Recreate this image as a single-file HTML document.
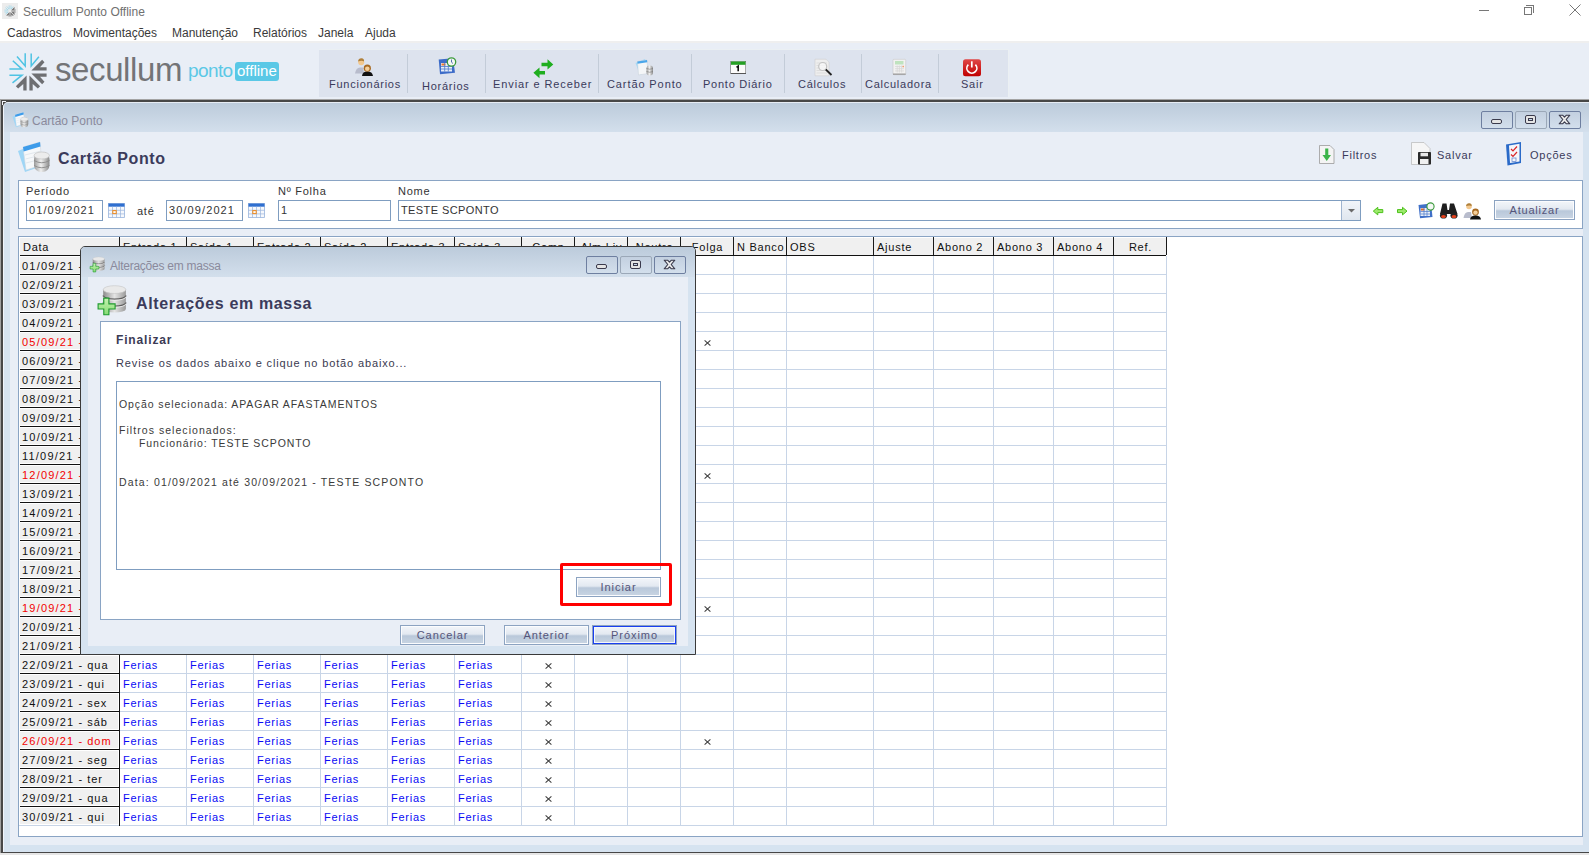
<!DOCTYPE html><html><head><meta charset="utf-8"><style>
*{margin:0;padding:0;box-sizing:border-box}
html,body{width:1589px;height:855px;overflow:hidden;background:#fff;position:relative;font-family:"Liberation Sans",sans-serif}
.abs{position:absolute}
.t{position:absolute;white-space:nowrap;line-height:1}
.ui{font-size:12px;color:#3a3a3a}
.v{font-size:11px;letter-spacing:0.75px}
.vd{font-size:11px;letter-spacing:1.0px}
.vdd{letter-spacing:1.2px}
.v10{font-size:10.5px;letter-spacing:0.9px;color:#3a3a3a}
.btn{position:absolute;border:1px solid #8ca3c1;background:linear-gradient(#f3f6fa 0%,#e3e9f1 45%,#b9c8da 55%,#c9d5e3 100%);box-shadow:inset 0 0 0 1px #fbfcfe}
.btn span{position:absolute;left:0;right:0;text-align:center;white-space:nowrap;line-height:1;font-size:11px;letter-spacing:0.95px;color:#55557a}
.wb{position:absolute;border:1px solid #7d8fa8;border-radius:2px;background:linear-gradient(#dfe7f1,#c3d1e2)}
</style></head><body>
<div class="abs" style="left:2px;top:3px;width:16px;height:16px;background:#ececec"></div>
<svg class="abs" style="left:4px;top:5px;overflow:visible" width="12" height="12" viewBox="-20 -20 40 40"><path d="M-11 -15.5L-2.8 -6V-18.7M10.9 -15.2L3.2 -6V-18.4M-15.2 -11.3L-6 -2.9H-18.6M-15.5 10.8L-6 3.2H-18.6" stroke="#8fd4ec" stroke-width="2.2" fill="none"/><path d="M3.38 -1.4H18.6V-4.7H12L16.48 -9.83L14.14 -12.16Z M3.38 1.4H18.6V4.7H12L16.48 9.83L14.14 12.16Z M1.4 3.38V18.6H4.7V12L9.83 16.48L12.16 14.14Z M-1.4 3.38V18.6H-4.7V12L-9.83 16.48L-12.16 14.14Z" fill="#707070"/></svg>
<div class="t ui" style="left:23px;top:6px;color:#707070">Secullum Ponto Offline</div>
<div class="abs" style="left:1479px;top:10px;width:10px;height:1px;background:#777"></div>
<div class="abs" style="left:1524px;top:7px;width:8px;height:8px;border:1px solid #777;background:#fff"></div>
<div class="abs" style="left:1526px;top:5px;width:8px;height:8px;border-top:1px solid #777;border-right:1px solid #777"></div>
<svg class="abs" style="left:1569px;top:4px" width="12" height="12"><path d="M0.5 0.5L11.5 11.5M11.5 0.5L0.5 11.5" stroke="#777" stroke-width="1"/></svg>
<div class="t ui" style="left:7px;top:27px">Cadastros</div>
<div class="t ui" style="left:73px;top:27px">Movimentações</div>
<div class="t ui" style="left:172px;top:27px">Manutenção</div>
<div class="t ui" style="left:253px;top:27px">Relatórios</div>
<div class="t ui" style="left:318px;top:27px">Janela</div>
<div class="t ui" style="left:365px;top:27px">Ajuda</div>
<div class="abs" style="left:0;top:41px;width:1589px;height:58px;background:#e9eef6"></div>
<svg class="abs" style="left:8.4px;top:51.6px;overflow:visible" width="40" height="40" viewBox="-20 -20 40 40"><path d="M-11 -15.5L-2.8 -6V-18.7M10.9 -15.2L3.2 -6V-18.4M-15.2 -11.3L-6 -2.9H-18.6M-15.5 10.8L-6 3.2H-18.6" stroke="#4fc3e3" stroke-width="1.5" fill="none" stroke-linejoin="miter"/><path d="M3.38 -1.4H18.6V-4.7H12L16.48 -9.83L14.14 -12.16Z M3.38 1.4H18.6V4.7H12L16.48 9.83L14.14 12.16Z M1.4 3.38V18.6H4.7V12L9.83 16.48L12.16 14.14Z M-1.4 3.38V18.6H-4.7V12L-9.83 16.48L-12.16 14.14Z" fill="#6e6f72"/></svg>
<div class="t" style="left:55px;top:53px;font-size:33px;letter-spacing:-0.4px;color:#737477">secullum</div>
<div class="t" style="left:188px;top:61px;font-size:19px;letter-spacing:-0.6px;color:#5bc8e6">ponto</div>
<div class="abs" style="left:235px;top:62px;width:44px;height:19px;border-radius:3px;background:#5ac8e6"></div>
<div class="t" style="left:237px;top:63px;font-size:15px;letter-spacing:0px;color:#fff">offline</div>
<div class="abs" style="left:319px;top:49px;width:690px;height:48px;background:#ebf0f3"></div>
<div class="abs" style="left:319px;top:50px;width:689px;height:47px;background:#dde3ee"></div>
<div class="abs" style="left:407px;top:54px;width:1px;height:39px;background:#c3ccd8"></div>
<div class="abs" style="left:485px;top:54px;width:1px;height:39px;background:#c3ccd8"></div>
<div class="abs" style="left:598px;top:54px;width:1px;height:39px;background:#c3ccd8"></div>
<div class="abs" style="left:691px;top:54px;width:1px;height:39px;background:#c3ccd8"></div>
<div class="abs" style="left:784px;top:54px;width:1px;height:39px;background:#c3ccd8"></div>
<div class="abs" style="left:861px;top:54px;width:1px;height:39px;background:#c3ccd8"></div>
<div class="abs" style="left:938px;top:54px;width:1px;height:39px;background:#c3ccd8"></div>
<div class="t v" style="left:329px;top:79px;color:#3a3a5a">Funcionários</div>
<div class="t v" style="left:422px;top:81px;color:#3a3a5a">Horários</div>
<div class="t v" style="left:493px;top:79px;color:#3a3a5a;letter-spacing:0.9px">Enviar e Receber</div>
<div class="t v" style="left:607px;top:79px;color:#3a3a5a;letter-spacing:0.9px">Cartão Ponto</div>
<div class="t v" style="left:703px;top:79px;color:#3a3a5a">Ponto Diário</div>
<div class="t v" style="left:798px;top:79px;color:#3a3a5a">Cálculos</div>
<div class="t v" style="left:865px;top:79px;color:#3a3a5a">Calculadora</div>
<div class="t v" style="left:961px;top:79px;color:#3a3a5a">Sair</div>
<svg class="abs" style="left:0;top:0;overflow:visible" width="1589" height="855">
<defs>
<linearGradient id="gdb" x1="0" x2="1"><stop offset="0" stop-color="#9a9a9a"/><stop offset="0.45" stop-color="#f0f0f0"/><stop offset="1" stop-color="#8a8a8a"/></linearGradient>
<linearGradient id="gred" x1="0" y1="0" x2="0" y2="1"><stop offset="0" stop-color="#e04848"/><stop offset="1" stop-color="#c00000"/></linearGradient>
</defs>
<!-- Funcionarios -->
<path d="M355 73.5Q356 67.5 360 67.5H363L364 73.5Z" fill="#b8bccc"/>
<circle cx="361.2" cy="62.2" r="3" fill="#f3c88e"/><path d="M358 61.5Q358.5 58.2 361.5 58.3Q364.5 58.5 364 61.5Q362 60 358 61.5Z" fill="#b0803a"/>
<path d="M362 76Q362.5 71.5 367.3 71.2Q372.3 71.5 373 76Z" fill="#111"/>
<circle cx="367.3" cy="68.2" r="3.6" fill="#a86a22"/><circle cx="367.3" cy="68.8" r="2.3" fill="#f5cf9a"/>
<!-- Horarios -->
<path d="M438.7 59.5L453 58.2L455 72.8L440 74.2Z" fill="#3d6cc8"/>
<rect x="441" y="63" width="11" height="8.5" fill="#e8eef8"/>
<rect x="441.5" y="63.5" width="4" height="2" fill="#e8782a"/>
<path d="M441 66.5H452M441 69H452M444.7 63V71.5M448.3 63V71.5" stroke="#4a78cc" stroke-width="0.8"/>
<circle cx="451.5" cy="62" r="4.2" fill="#f4f8f4" stroke="#3c9a3c" stroke-width="1.3"/>
<path d="M451.5 59.5V62.2L453 63.5" stroke="#3050a0" stroke-width="0.8" fill="none"/>
<!-- Enviar e Receber -->
<path d="M541.5 62.7H547.5V59.3L553.3 64.4L547.5 69.6V66.2H541.5Z" fill="#1fae1f"/>
<path d="M545 71H539.5V67.4L533.4 72.8L539.5 78.3V74.6H545Z" fill="#1fae1f"/>
<!-- Cartao Ponto -->
<path d="M635.5 63L645 59L649.5 71L640 75Z" fill="#a8d8f4"/>
<path d="M637.5 61.5L647 60L648 73.5L638.5 75Z" fill="#f4f6f8" stroke="#c8d0d8" stroke-width="0.5"/>
<path d="M637.3 61.6L647 60L647.3 62.3L637.5 63.8Z" fill="#4aa6ea"/>
<rect x="646.5" y="65.5" width="6.5" height="10" rx="3" fill="url(#gdb)"/>
<path d="M646.5 68.5Q649.7 70 653 68.5M646.5 71.5Q649.7 73 653 71.5" stroke="#777" stroke-width="0.6" fill="none"/>
<!-- Ponto Diario -->
<rect x="730.5" y="61" width="15.5" height="13" fill="#555"/>
<rect x="731" y="61.5" width="14.5" height="11.5" fill="#fbfbfb"/>
<rect x="731" y="61.5" width="14.5" height="3.3" fill="#24a024"/>
<path d="M736.5 67.3L738.2 66V71.2" stroke="#111" stroke-width="1.6" fill="none"/>
<!-- Calculos -->
<path d="M815 59.2H826L829 62.2V75.8H815Z" fill="#eeeeee" stroke="#cfcfcf" stroke-width="0.6"/>
<path d="M816.5 63H827M816.5 65.5H827M816.5 68H827M816.5 70.5H827M816.5 73H827" stroke="#d6d6d6" stroke-width="0.7"/>
<circle cx="822.7" cy="66.5" r="4" fill="#f8f8f8" fill-opacity="0.8" stroke="#c4c4c4" stroke-width="1.2"/>
<path d="M825.8 69.5L831.5 75" stroke="#222" stroke-width="1.8"/>
<!-- Calculadora -->
<rect x="893" y="59.3" width="12.7" height="15.4" rx="1" fill="#f2f2f2" stroke="#c8c8c8" stroke-width="0.6"/>
<rect x="893" y="73.5" width="12.7" height="1.3" fill="#9a9a9a"/>
<rect x="895" y="61" width="8.5" height="3.5" fill="#bfe3bf"/>
<path d="M895 66.5H904M895 68.7H904M895 70.9H904M897.2 65.5V72.5M899.4 65.5V72.5M901.6 65.5V72.5" stroke="#d8d8d8" stroke-width="0.8"/>
<rect x="902.5" y="65.8" width="1.5" height="1.5" fill="#f4a070"/>
<!-- Sair -->
<rect x="963" y="59.2" width="18" height="17" rx="2.5" fill="url(#gred)"/>
<path d="M968.3 64.6A5 5 0 1 0 975.4 64.6" stroke="#fff" stroke-width="1.7" fill="none"/>
<path d="M971.8 61.3V67.5" stroke="#fff" stroke-width="1.7"/>
</svg>
<div class="abs" style="left:0;top:41px;width:1589px;height:2px;background:#efefef"></div>
<div class="abs" style="left:0;top:99px;width:1589px;height:756px;background:#474747"></div>
<div class="abs" style="left:0;top:99px;width:1589px;height:1px;background:#a4a4a4"></div>
<div class="abs" style="left:0;top:99px;width:1px;height:756px;background:#a0a0a0"></div>
<div class="abs" style="left:3px;top:102px;width:1586px;height:750px;background:#d6e3f0;border-top-left-radius:5px;border-top:1px solid #e6ecf4;border-left:1px solid #f0f4fa"></div>
<div class="abs" style="left:4px;top:103px;width:1585px;height:29px;border-top-left-radius:4px;background:linear-gradient(#bccbdb,#d3dfec)"></div>
<div class="abs" style="left:2px;top:101px;width:4px;height:1px;background:#f4f6fa"></div>
<div class="abs" style="left:2px;top:101px;width:1px;height:4px;background:#f4f6fa"></div>
<div class="abs" style="left:0;top:853px;width:1589px;height:2px;background:#e6e6e6"></div>
<div class="t" style="left:32px;top:115px;font-size:12px;color:#8a8a9c">Cartão Ponto</div>
<div class="abs" style="left:1481px;top:111px;width:32px;height:18px;border:1px solid #6e7fa0;border-radius:2px;background:linear-gradient(#c3d0e0,#d3dfec)"></div>
<div class="abs" style="left:1491px;top:119px;width:11px;height:5px;border:1px solid #3a3a4c;border-radius:2px;background:#e4e4e4"></div>
<div class="abs" style="left:1515px;top:111px;width:32px;height:18px;border:1px solid #9ba8b8;border-radius:2px;background:linear-gradient(#c3d0e0,#d3dfec)"></div>
<div class="abs" style="left:1525px;top:115px;width:11px;height:9px;border:1.5px solid #3a3a4c;border-radius:2px;background:#e4e4e4"></div>
<div class="abs" style="left:1528px;top:118px;width:5px;height:3px;border:1px solid #3a3a4c;background:#c8d8ea"></div>
<div class="abs" style="left:1549px;top:111px;width:32px;height:18px;border:1px solid #6e7fa0;border-radius:2px;background:linear-gradient(#c3d0e0,#d3dfec)"></div>
<svg class="abs" style="left:1558px;top:114px" width="13" height="11" viewBox="0 0 13 11"><path d="M1.2 1.2H4.6L6.5 3.2L8.4 1.2H11.8L8.2 5.5L11.8 9.8H8.4L6.5 7.8L4.6 9.8H1.2L4.8 5.5Z" fill="#ececec" stroke="#3a3a4c" stroke-width="1.1" stroke-linejoin="round"/></svg>
<div class="abs" style="left:10px;top:132px;width:1573px;height:713px;background:#e9eef6"></div>
<div class="t" style="left:58px;top:151px;font-size:16px;font-weight:bold;letter-spacing:0.6px;color:#3b3b5b">Cartão Ponto</div>
<div class="t v" style="left:1342px;top:150px;color:#3a3a5a">Filtros</div>
<div class="t v" style="left:1437px;top:150px;color:#3a3a5a">Salvar</div>
<div class="t v" style="left:1530px;top:150px;color:#3a3a5a">Opções</div>
<div class="abs" style="left:18px;top:180px;width:1565px;height:49px;background:#fff;border:1px solid #8aa4c4"></div>
<div class="t v" style="left:26px;top:186px;color:#333">Período</div>
<div class="abs" style="left:26px;top:200px;width:77px;height:21px;background:#fff;border:1px solid #7f9dc0"></div>
<div class="t v" style="left:29px;top:205px;color:#333;letter-spacing:1.1px">01/09/2021</div>
<div class="t v" style="left:137px;top:206px;color:#333">até</div>
<div class="abs" style="left:166px;top:200px;width:77px;height:21px;background:#fff;border:1px solid #7f9dc0"></div>
<div class="t v" style="left:169px;top:205px;color:#333;letter-spacing:1.1px">30/09/2021</div>
<div class="t v" style="left:278px;top:186px;color:#333">Nº Folha</div>
<div class="abs" style="left:278px;top:200px;width:113px;height:21px;background:#fff;border:1px solid #7f9dc0"></div>
<div class="t v" style="left:281px;top:205px;color:#333;letter-spacing:1.1px">1</div>
<div class="t v" style="left:398px;top:186px;color:#333">Nome</div>
<div class="abs" style="left:398px;top:200px;width:963px;height:21px;background:#fff;border:1px solid #7f9dc0"></div>
<div class="t v" style="left:401px;top:205px;color:#333;letter-spacing:0.4px">TESTE SCPONTO</div>
<div class="abs" style="left:1341px;top:201px;width:19px;height:19px;background:linear-gradient(#f2f5f9,#dfe6ef);border-left:1px solid #9fb4cf"></div>
<div class="btn" style="left:1494px;top:200px;width:81px;height:20px"><span style="top:4px;letter-spacing:0.8px">Atualizar</span></div>
<svg class="abs" style="left:0;top:0;overflow:visible" width="1589" height="855"><g transform="translate(12.5,112.3) scale(0.5)">
<path d="M0 9L17 2L24 24L7 30Z" fill="#9fd6f6"/>
<path d="M5 5L22 0L24 23L8 28Z" fill="#f6f8fa" stroke="#d0d8e0" stroke-width="0.6"/>
<path d="M5 5L22 0L22.5 4.5L5.6 9.5Z" fill="#3e9cea"/>
<path d="M7 13L23 9M7.5 17L23.3 13M8 21L23.5 17" stroke="#dde3ea" stroke-width="0.8"/>
<rect x="16" y="10" width="15.5" height="20" rx="7" fill="url(#gdb)"/>
<ellipse cx="23.75" cy="13.5" rx="7.7" ry="3.5" fill="#ececec" stroke="#bdbdbd" stroke-width="0.6"/>
<path d="M16 18.5Q23.75 23 31.5 18.5M16 23.5Q23.75 28 31.5 23.5" stroke="#8a8a8a" stroke-width="0.9" fill="none"/>
</g><g transform="translate(18,142) scale(1.0)">
<path d="M0 9L17 2L24 24L7 30Z" fill="#9fd6f6"/>
<path d="M5 5L22 0L24 23L8 28Z" fill="#f6f8fa" stroke="#d0d8e0" stroke-width="0.6"/>
<path d="M5 5L22 0L22.5 4.5L5.6 9.5Z" fill="#3e9cea"/>
<path d="M7 13L23 9M7.5 17L23.3 13M8 21L23.5 17" stroke="#dde3ea" stroke-width="0.8"/>
<rect x="16" y="10" width="15.5" height="20" rx="7" fill="url(#gdb)"/>
<ellipse cx="23.75" cy="13.5" rx="7.7" ry="3.5" fill="#ececec" stroke="#bdbdbd" stroke-width="0.6"/>
<path d="M16 18.5Q23.75 23 31.5 18.5M16 23.5Q23.75 28 31.5 23.5" stroke="#8a8a8a" stroke-width="0.9" fill="none"/>
</g>
<!-- Filtros -->
<path d="M1319.5 145.5H1330L1334 149.5V163.5H1319.5Z" fill="#f4f4f4" stroke="#9a9a9a" stroke-width="0.8"/>
<path d="M1325.2 148.5H1328.3V155H1331L1326.75 161L1322.5 155H1325.2Z" fill="#3cb44a"/>
<!-- Salvar -->
<path d="M1411.5 142.5H1424L1430 148.5V164.5H1411.5Z" fill="#f6f6f6" stroke="#b8b8b8" stroke-width="0.7"/>
<rect x="1418" y="152" width="13" height="12.5" rx="0.8" fill="#2a2a2a"/>
<rect x="1420.5" y="152.8" width="7.5" height="3.5" fill="#e8e8e8"/>
<rect x="1420" y="159" width="8.5" height="5" fill="#f0f0f0"/>
<!-- Opcoes -->
<path d="M1506 144.5L1521 142V163L1507.5 165.6Z" fill="#2a6ac8"/>
<path d="M1509 145.5L1519.5 143.8V161.5L1510 163Z" fill="#f4f6fa"/>
<path d="M1511 149L1513 151L1517 146.5M1511 154.5L1513 156.5L1517 152" stroke="#d8262a" stroke-width="1.2" fill="none"/>
<rect x="1512" y="158" width="4" height="3.5" fill="none" stroke="#6a8ad0" stroke-width="0.8"/>
<!-- calendars -->
<rect x="108.5" y="203.5" width="16" height="14" fill="#f6f8fc" stroke="#9ab4dc" stroke-width="0.8"/>
<rect x="108.5" y="203.5" width="16" height="3.2" fill="#2f6fd0"/>
<path d="M108.5 210.3H124.5M108.5 213.9H124.5M112.5 206.7V217.5M116.5 206.7V217.5M120.5 206.7V217.5" stroke="#9ab4dc" stroke-width="0.7"/>
<rect x="112.8" y="210.6" width="3.4" height="3" fill="none" stroke="#f08a1c" stroke-width="1"/>
<rect x="248.5" y="203.5" width="16" height="14" fill="#f6f8fc" stroke="#9ab4dc" stroke-width="0.8"/>
<rect x="248.5" y="203.5" width="16" height="3.2" fill="#2f6fd0"/>
<path d="M248.5 210.3H264.5M248.5 213.9H264.5M252.5 206.7V217.5M256.5 206.7V217.5M260.5 206.7V217.5" stroke="#9ab4dc" stroke-width="0.7"/>
<rect x="252.8" y="210.6" width="3.4" height="3" fill="none" stroke="#f08a1c" stroke-width="1"/>
<!-- dropdown arrow -->
<path d="M1348 209H1355L1351.5 212.5Z" fill="#6a6a6a"/>
<!-- arrows -->
<path d="M1382.8 209.6H1377.8V207.3L1373.3 211.1L1377.8 214.9V212.6H1382.8Z" fill="#9de86c" stroke="#4cc21a" stroke-width="1"/>
<path d="M1397.5 209.6H1402.5V207.3L1407 211.1L1402.5 214.9V212.6H1397.5Z" fill="#9de86c" stroke="#4cc21a" stroke-width="1"/>
<!-- schedule -->
<path d="M1418.5 205L1431 203.5L1432.5 217L1420 218.3Z" fill="#4070c8"/>
<rect x="1420.5" y="208" width="9.5" height="8" fill="#e8eef8"/>
<rect x="1421" y="208.5" width="3.5" height="2" fill="#e06a2a"/>
<path d="M1420.5 211.5H1430M1420.5 214H1430M1424 208V216M1427 208V216" stroke="#4a78cc" stroke-width="0.7"/>
<circle cx="1430.5" cy="206.5" r="3.6" fill="#f4f8f4" stroke="#3c9a3c" stroke-width="1.1"/>
<!-- binoculars -->
<path d="M1440 214L1442.5 203.5H1446.5L1447.5 210H1449L1450 203.5H1454L1457.5 214Z" fill="#1e1e1e"/>
<ellipse cx="1443.5" cy="215.5" rx="3.6" ry="3.1" fill="#222"/><ellipse cx="1454" cy="215.5" rx="3.6" ry="3.1" fill="#222"/>
<ellipse cx="1443.5" cy="216.5" rx="2.4" ry="1.6" fill="#e8401a"/><ellipse cx="1454" cy="216.5" rx="2.4" ry="1.6" fill="#e8401a"/>
<!-- people -->
<path d="M1463.5 218Q1464.5 212 1468 212H1471L1472 218Z" fill="#b8bccc"/>
<circle cx="1469" cy="206.5" r="2.8" fill="#f3c88e"/><path d="M1466 206Q1466.5 203 1469.3 203.2Q1472 203.5 1471.7 206Q1469.5 204.8 1466 206Z" fill="#b0803a"/>
<path d="M1470 219.5Q1470.5 215.5 1475.5 215.2Q1480.5 215.5 1481 219.5Z" fill="#111"/>
<circle cx="1475.5" cy="212" r="3.4" fill="#a86a22"/><circle cx="1475.5" cy="212.6" r="2.2" fill="#f5cf9a"/>
</svg>
<div class="abs" style="left:18px;top:236px;width:1565px;height:601px;background:#fff;border:1px solid #8aa4c4"></div>
<div class="abs" style="left:20px;top:238px;width:1146px;height:17px;background:#f0f0f0"></div>
<div class="abs" style="left:20px;top:255px;width:1146px;height:1px;background:#111"></div>
<div class="abs" style="left:119px;top:237px;width:1px;height:18px;background:#1a1a1a"></div>
<div class="abs" style="left:186px;top:237px;width:1px;height:18px;background:#1a1a1a"></div>
<div class="abs" style="left:253px;top:237px;width:1px;height:18px;background:#1a1a1a"></div>
<div class="abs" style="left:320px;top:237px;width:1px;height:18px;background:#1a1a1a"></div>
<div class="abs" style="left:387px;top:237px;width:1px;height:18px;background:#1a1a1a"></div>
<div class="abs" style="left:454px;top:237px;width:1px;height:18px;background:#1a1a1a"></div>
<div class="abs" style="left:521px;top:237px;width:1px;height:18px;background:#1a1a1a"></div>
<div class="abs" style="left:574px;top:237px;width:1px;height:18px;background:#1a1a1a"></div>
<div class="abs" style="left:627px;top:237px;width:1px;height:18px;background:#1a1a1a"></div>
<div class="abs" style="left:680px;top:237px;width:1px;height:18px;background:#1a1a1a"></div>
<div class="abs" style="left:733px;top:237px;width:1px;height:18px;background:#1a1a1a"></div>
<div class="abs" style="left:786px;top:237px;width:1px;height:18px;background:#1a1a1a"></div>
<div class="abs" style="left:873px;top:237px;width:1px;height:18px;background:#1a1a1a"></div>
<div class="abs" style="left:933px;top:237px;width:1px;height:18px;background:#1a1a1a"></div>
<div class="abs" style="left:993px;top:237px;width:1px;height:18px;background:#1a1a1a"></div>
<div class="abs" style="left:1053px;top:237px;width:1px;height:18px;background:#1a1a1a"></div>
<div class="abs" style="left:1113px;top:237px;width:1px;height:18px;background:#1a1a1a"></div>
<div class="abs" style="left:1166px;top:237px;width:1px;height:18px;background:#1a1a1a"></div>
<div class="t v" style="left:23px;top:242px;color:#111">Data</div>
<div class="t v" style="left:123px;top:242px;color:#111">Entrada 1</div>
<div class="t v" style="left:190px;top:242px;color:#111">Saída 1</div>
<div class="t v" style="left:257px;top:242px;color:#111">Entrada 2</div>
<div class="t v" style="left:324px;top:242px;color:#111">Saída 2</div>
<div class="t v" style="left:391px;top:242px;color:#111">Entrada 3</div>
<div class="t v" style="left:458px;top:242px;color:#111">Saída 3</div>
<div class="t v" style="left:522px;width:53px;text-align:center;top:242px;color:#111">Comp</div>
<div class="t v" style="left:575px;width:53px;text-align:center;top:242px;color:#111">Alm Liv</div>
<div class="t v" style="left:628px;width:53px;text-align:center;top:242px;color:#111">Neutro</div>
<div class="t v" style="left:681px;width:53px;text-align:center;top:242px;color:#111">Folga</div>
<div class="t v" style="left:737px;top:242px;color:#111">N Banco</div>
<div class="t v" style="left:790px;top:242px;color:#111">OBS</div>
<div class="t v" style="left:877px;top:242px;color:#111">Ajuste</div>
<div class="t v" style="left:937px;top:242px;color:#111">Abono 2</div>
<div class="t v" style="left:997px;top:242px;color:#111">Abono 3</div>
<div class="t v" style="left:1057px;top:242px;color:#111">Abono 4</div>
<div class="t v" style="left:1114px;width:53px;text-align:center;top:242px;color:#111">Ref.</div>
<div class="abs" style="left:20px;top:257px;width:98px;height:16px;background:#f0f0f0"></div>
<div class="abs" style="left:20px;top:276px;width:98px;height:16px;background:#f0f0f0"></div>
<div class="abs" style="left:20px;top:295px;width:98px;height:16px;background:#f0f0f0"></div>
<div class="abs" style="left:20px;top:314px;width:98px;height:16px;background:#f0f0f0"></div>
<div class="abs" style="left:20px;top:333px;width:98px;height:16px;background:#f0f0f0"></div>
<div class="abs" style="left:20px;top:352px;width:98px;height:16px;background:#f0f0f0"></div>
<div class="abs" style="left:20px;top:371px;width:98px;height:16px;background:#f0f0f0"></div>
<div class="abs" style="left:20px;top:390px;width:98px;height:16px;background:#f0f0f0"></div>
<div class="abs" style="left:20px;top:409px;width:98px;height:16px;background:#f0f0f0"></div>
<div class="abs" style="left:20px;top:428px;width:98px;height:16px;background:#f0f0f0"></div>
<div class="abs" style="left:20px;top:447px;width:98px;height:16px;background:#f0f0f0"></div>
<div class="abs" style="left:20px;top:466px;width:98px;height:16px;background:#f0f0f0"></div>
<div class="abs" style="left:20px;top:485px;width:98px;height:16px;background:#f0f0f0"></div>
<div class="abs" style="left:20px;top:504px;width:98px;height:16px;background:#f0f0f0"></div>
<div class="abs" style="left:20px;top:523px;width:98px;height:16px;background:#f0f0f0"></div>
<div class="abs" style="left:20px;top:542px;width:98px;height:16px;background:#f0f0f0"></div>
<div class="abs" style="left:20px;top:561px;width:98px;height:16px;background:#f0f0f0"></div>
<div class="abs" style="left:20px;top:580px;width:98px;height:16px;background:#f0f0f0"></div>
<div class="abs" style="left:20px;top:599px;width:98px;height:16px;background:#f0f0f0"></div>
<div class="abs" style="left:20px;top:618px;width:98px;height:16px;background:#f0f0f0"></div>
<div class="abs" style="left:20px;top:637px;width:98px;height:16px;background:#f0f0f0"></div>
<div class="abs" style="left:20px;top:656px;width:98px;height:16px;background:#f0f0f0"></div>
<div class="abs" style="left:20px;top:675px;width:98px;height:16px;background:#f0f0f0"></div>
<div class="abs" style="left:20px;top:694px;width:98px;height:16px;background:#f0f0f0"></div>
<div class="abs" style="left:20px;top:713px;width:98px;height:16px;background:#f0f0f0"></div>
<div class="abs" style="left:20px;top:732px;width:98px;height:16px;background:#f0f0f0"></div>
<div class="abs" style="left:20px;top:751px;width:98px;height:16px;background:#f0f0f0"></div>
<div class="abs" style="left:20px;top:770px;width:98px;height:16px;background:#f0f0f0"></div>
<div class="abs" style="left:20px;top:789px;width:98px;height:16px;background:#f0f0f0"></div>
<div class="abs" style="left:20px;top:808px;width:98px;height:16px;background:#f0f0f0"></div>
<div class="abs" style="left:119px;top:274px;width:1048px;height:1px;background:#c8d5e7"></div>
<div class="abs" style="left:20px;top:274px;width:99px;height:1px;background:#111"></div>
<div class="abs" style="left:119px;top:293px;width:1048px;height:1px;background:#c8d5e7"></div>
<div class="abs" style="left:20px;top:293px;width:99px;height:1px;background:#111"></div>
<div class="abs" style="left:119px;top:312px;width:1048px;height:1px;background:#c8d5e7"></div>
<div class="abs" style="left:20px;top:312px;width:99px;height:1px;background:#111"></div>
<div class="abs" style="left:119px;top:331px;width:1048px;height:1px;background:#c8d5e7"></div>
<div class="abs" style="left:20px;top:331px;width:99px;height:1px;background:#111"></div>
<div class="abs" style="left:119px;top:350px;width:1048px;height:1px;background:#c8d5e7"></div>
<div class="abs" style="left:20px;top:350px;width:99px;height:1px;background:#111"></div>
<div class="abs" style="left:119px;top:369px;width:1048px;height:1px;background:#c8d5e7"></div>
<div class="abs" style="left:20px;top:369px;width:99px;height:1px;background:#111"></div>
<div class="abs" style="left:119px;top:388px;width:1048px;height:1px;background:#c8d5e7"></div>
<div class="abs" style="left:20px;top:388px;width:99px;height:1px;background:#111"></div>
<div class="abs" style="left:119px;top:407px;width:1048px;height:1px;background:#c8d5e7"></div>
<div class="abs" style="left:20px;top:407px;width:99px;height:1px;background:#111"></div>
<div class="abs" style="left:119px;top:426px;width:1048px;height:1px;background:#c8d5e7"></div>
<div class="abs" style="left:20px;top:426px;width:99px;height:1px;background:#111"></div>
<div class="abs" style="left:119px;top:445px;width:1048px;height:1px;background:#c8d5e7"></div>
<div class="abs" style="left:20px;top:445px;width:99px;height:1px;background:#111"></div>
<div class="abs" style="left:119px;top:464px;width:1048px;height:1px;background:#c8d5e7"></div>
<div class="abs" style="left:20px;top:464px;width:99px;height:1px;background:#111"></div>
<div class="abs" style="left:119px;top:483px;width:1048px;height:1px;background:#c8d5e7"></div>
<div class="abs" style="left:20px;top:483px;width:99px;height:1px;background:#111"></div>
<div class="abs" style="left:119px;top:502px;width:1048px;height:1px;background:#c8d5e7"></div>
<div class="abs" style="left:20px;top:502px;width:99px;height:1px;background:#111"></div>
<div class="abs" style="left:119px;top:521px;width:1048px;height:1px;background:#c8d5e7"></div>
<div class="abs" style="left:20px;top:521px;width:99px;height:1px;background:#111"></div>
<div class="abs" style="left:119px;top:540px;width:1048px;height:1px;background:#c8d5e7"></div>
<div class="abs" style="left:20px;top:540px;width:99px;height:1px;background:#111"></div>
<div class="abs" style="left:119px;top:559px;width:1048px;height:1px;background:#c8d5e7"></div>
<div class="abs" style="left:20px;top:559px;width:99px;height:1px;background:#111"></div>
<div class="abs" style="left:119px;top:578px;width:1048px;height:1px;background:#c8d5e7"></div>
<div class="abs" style="left:20px;top:578px;width:99px;height:1px;background:#111"></div>
<div class="abs" style="left:119px;top:597px;width:1048px;height:1px;background:#c8d5e7"></div>
<div class="abs" style="left:20px;top:597px;width:99px;height:1px;background:#111"></div>
<div class="abs" style="left:119px;top:616px;width:1048px;height:1px;background:#c8d5e7"></div>
<div class="abs" style="left:20px;top:616px;width:99px;height:1px;background:#111"></div>
<div class="abs" style="left:119px;top:635px;width:1048px;height:1px;background:#c8d5e7"></div>
<div class="abs" style="left:20px;top:635px;width:99px;height:1px;background:#111"></div>
<div class="abs" style="left:119px;top:654px;width:1048px;height:1px;background:#c8d5e7"></div>
<div class="abs" style="left:20px;top:654px;width:99px;height:1px;background:#111"></div>
<div class="abs" style="left:119px;top:673px;width:1048px;height:1px;background:#c8d5e7"></div>
<div class="abs" style="left:20px;top:673px;width:99px;height:1px;background:#111"></div>
<div class="abs" style="left:119px;top:692px;width:1048px;height:1px;background:#c8d5e7"></div>
<div class="abs" style="left:20px;top:692px;width:99px;height:1px;background:#111"></div>
<div class="abs" style="left:119px;top:711px;width:1048px;height:1px;background:#c8d5e7"></div>
<div class="abs" style="left:20px;top:711px;width:99px;height:1px;background:#111"></div>
<div class="abs" style="left:119px;top:730px;width:1048px;height:1px;background:#c8d5e7"></div>
<div class="abs" style="left:20px;top:730px;width:99px;height:1px;background:#111"></div>
<div class="abs" style="left:119px;top:749px;width:1048px;height:1px;background:#c8d5e7"></div>
<div class="abs" style="left:20px;top:749px;width:99px;height:1px;background:#111"></div>
<div class="abs" style="left:119px;top:768px;width:1048px;height:1px;background:#c8d5e7"></div>
<div class="abs" style="left:20px;top:768px;width:99px;height:1px;background:#111"></div>
<div class="abs" style="left:119px;top:787px;width:1048px;height:1px;background:#c8d5e7"></div>
<div class="abs" style="left:20px;top:787px;width:99px;height:1px;background:#111"></div>
<div class="abs" style="left:119px;top:806px;width:1048px;height:1px;background:#c8d5e7"></div>
<div class="abs" style="left:20px;top:806px;width:99px;height:1px;background:#111"></div>
<div class="abs" style="left:119px;top:825px;width:1048px;height:1px;background:#c8d5e7"></div>
<div class="abs" style="left:19px;top:825px;width:100px;height:1px;background:#c8d5e7"></div>
<div class="abs" style="left:186px;top:256px;width:1px;height:570px;background:#c8d5e7"></div>
<div class="abs" style="left:253px;top:256px;width:1px;height:570px;background:#c8d5e7"></div>
<div class="abs" style="left:320px;top:256px;width:1px;height:570px;background:#c8d5e7"></div>
<div class="abs" style="left:387px;top:256px;width:1px;height:570px;background:#c8d5e7"></div>
<div class="abs" style="left:454px;top:256px;width:1px;height:570px;background:#c8d5e7"></div>
<div class="abs" style="left:521px;top:256px;width:1px;height:570px;background:#c8d5e7"></div>
<div class="abs" style="left:574px;top:256px;width:1px;height:570px;background:#c8d5e7"></div>
<div class="abs" style="left:627px;top:256px;width:1px;height:570px;background:#c8d5e7"></div>
<div class="abs" style="left:680px;top:256px;width:1px;height:570px;background:#c8d5e7"></div>
<div class="abs" style="left:733px;top:256px;width:1px;height:570px;background:#c8d5e7"></div>
<div class="abs" style="left:786px;top:256px;width:1px;height:570px;background:#c8d5e7"></div>
<div class="abs" style="left:873px;top:256px;width:1px;height:570px;background:#c8d5e7"></div>
<div class="abs" style="left:933px;top:256px;width:1px;height:570px;background:#c8d5e7"></div>
<div class="abs" style="left:993px;top:256px;width:1px;height:570px;background:#c8d5e7"></div>
<div class="abs" style="left:1053px;top:256px;width:1px;height:570px;background:#c8d5e7"></div>
<div class="abs" style="left:1113px;top:256px;width:1px;height:570px;background:#c8d5e7"></div>
<div class="abs" style="left:1166px;top:256px;width:1px;height:570px;background:#c8d5e7"></div>
<div class="abs" style="left:119px;top:256px;width:1px;height:570px;background:#111"></div>
<div class="t vd" style="left:22px;top:261px;color:#111"><span class="vdd">01/09/21</span> - qua</div>
<div class="t v" style="left:123px;top:261px;color:#0a0af5">Ferias</div>
<div class="t v" style="left:190px;top:261px;color:#0a0af5">Ferias</div>
<div class="t v" style="left:257px;top:261px;color:#0a0af5">Ferias</div>
<div class="t v" style="left:324px;top:261px;color:#0a0af5">Ferias</div>
<div class="t v" style="left:391px;top:261px;color:#0a0af5">Ferias</div>
<div class="t v" style="left:458px;top:261px;color:#0a0af5">Ferias</div>
<svg class="abs" style="left:545px;top:264px" width="7" height="6"><path d="M0.6 0.4L6.4 5.6M6.4 0.4L0.6 5.6" stroke="#3c3c3c" stroke-width="1.05"/></svg>
<div class="t vd" style="left:22px;top:280px;color:#111"><span class="vdd">02/09/21</span> - qui</div>
<div class="t v" style="left:123px;top:280px;color:#0a0af5">Ferias</div>
<div class="t v" style="left:190px;top:280px;color:#0a0af5">Ferias</div>
<div class="t v" style="left:257px;top:280px;color:#0a0af5">Ferias</div>
<div class="t v" style="left:324px;top:280px;color:#0a0af5">Ferias</div>
<div class="t v" style="left:391px;top:280px;color:#0a0af5">Ferias</div>
<div class="t v" style="left:458px;top:280px;color:#0a0af5">Ferias</div>
<svg class="abs" style="left:545px;top:283px" width="7" height="6"><path d="M0.6 0.4L6.4 5.6M6.4 0.4L0.6 5.6" stroke="#3c3c3c" stroke-width="1.05"/></svg>
<div class="t vd" style="left:22px;top:299px;color:#111"><span class="vdd">03/09/21</span> - sex</div>
<div class="t v" style="left:123px;top:299px;color:#0a0af5">Ferias</div>
<div class="t v" style="left:190px;top:299px;color:#0a0af5">Ferias</div>
<div class="t v" style="left:257px;top:299px;color:#0a0af5">Ferias</div>
<div class="t v" style="left:324px;top:299px;color:#0a0af5">Ferias</div>
<div class="t v" style="left:391px;top:299px;color:#0a0af5">Ferias</div>
<div class="t v" style="left:458px;top:299px;color:#0a0af5">Ferias</div>
<svg class="abs" style="left:545px;top:302px" width="7" height="6"><path d="M0.6 0.4L6.4 5.6M6.4 0.4L0.6 5.6" stroke="#3c3c3c" stroke-width="1.05"/></svg>
<div class="t vd" style="left:22px;top:318px;color:#111"><span class="vdd">04/09/21</span> - sáb</div>
<div class="t v" style="left:123px;top:318px;color:#0a0af5">Ferias</div>
<div class="t v" style="left:190px;top:318px;color:#0a0af5">Ferias</div>
<div class="t v" style="left:257px;top:318px;color:#0a0af5">Ferias</div>
<div class="t v" style="left:324px;top:318px;color:#0a0af5">Ferias</div>
<div class="t v" style="left:391px;top:318px;color:#0a0af5">Ferias</div>
<div class="t v" style="left:458px;top:318px;color:#0a0af5">Ferias</div>
<svg class="abs" style="left:545px;top:321px" width="7" height="6"><path d="M0.6 0.4L6.4 5.6M6.4 0.4L0.6 5.6" stroke="#3c3c3c" stroke-width="1.05"/></svg>
<div class="t vd" style="left:22px;top:337px;color:#f20000"><span class="vdd">05/09/21</span> - dom</div>
<div class="t v" style="left:123px;top:337px;color:#0a0af5">Ferias</div>
<div class="t v" style="left:190px;top:337px;color:#0a0af5">Ferias</div>
<div class="t v" style="left:257px;top:337px;color:#0a0af5">Ferias</div>
<div class="t v" style="left:324px;top:337px;color:#0a0af5">Ferias</div>
<div class="t v" style="left:391px;top:337px;color:#0a0af5">Ferias</div>
<div class="t v" style="left:458px;top:337px;color:#0a0af5">Ferias</div>
<svg class="abs" style="left:545px;top:340px" width="7" height="6"><path d="M0.6 0.4L6.4 5.6M6.4 0.4L0.6 5.6" stroke="#3c3c3c" stroke-width="1.05"/></svg>
<svg class="abs" style="left:704px;top:340px" width="7" height="6"><path d="M0.6 0.4L6.4 5.6M6.4 0.4L0.6 5.6" stroke="#3c3c3c" stroke-width="1.05"/></svg>
<div class="t vd" style="left:22px;top:356px;color:#111"><span class="vdd">06/09/21</span> - seg</div>
<div class="t v" style="left:123px;top:356px;color:#0a0af5">Ferias</div>
<div class="t v" style="left:190px;top:356px;color:#0a0af5">Ferias</div>
<div class="t v" style="left:257px;top:356px;color:#0a0af5">Ferias</div>
<div class="t v" style="left:324px;top:356px;color:#0a0af5">Ferias</div>
<div class="t v" style="left:391px;top:356px;color:#0a0af5">Ferias</div>
<div class="t v" style="left:458px;top:356px;color:#0a0af5">Ferias</div>
<svg class="abs" style="left:545px;top:359px" width="7" height="6"><path d="M0.6 0.4L6.4 5.6M6.4 0.4L0.6 5.6" stroke="#3c3c3c" stroke-width="1.05"/></svg>
<div class="t vd" style="left:22px;top:375px;color:#111"><span class="vdd">07/09/21</span> - ter</div>
<div class="t v" style="left:123px;top:375px;color:#0a0af5">Ferias</div>
<div class="t v" style="left:190px;top:375px;color:#0a0af5">Ferias</div>
<div class="t v" style="left:257px;top:375px;color:#0a0af5">Ferias</div>
<div class="t v" style="left:324px;top:375px;color:#0a0af5">Ferias</div>
<div class="t v" style="left:391px;top:375px;color:#0a0af5">Ferias</div>
<div class="t v" style="left:458px;top:375px;color:#0a0af5">Ferias</div>
<svg class="abs" style="left:545px;top:378px" width="7" height="6"><path d="M0.6 0.4L6.4 5.6M6.4 0.4L0.6 5.6" stroke="#3c3c3c" stroke-width="1.05"/></svg>
<div class="t vd" style="left:22px;top:394px;color:#111"><span class="vdd">08/09/21</span> - qua</div>
<div class="t v" style="left:123px;top:394px;color:#0a0af5">Ferias</div>
<div class="t v" style="left:190px;top:394px;color:#0a0af5">Ferias</div>
<div class="t v" style="left:257px;top:394px;color:#0a0af5">Ferias</div>
<div class="t v" style="left:324px;top:394px;color:#0a0af5">Ferias</div>
<div class="t v" style="left:391px;top:394px;color:#0a0af5">Ferias</div>
<div class="t v" style="left:458px;top:394px;color:#0a0af5">Ferias</div>
<svg class="abs" style="left:545px;top:397px" width="7" height="6"><path d="M0.6 0.4L6.4 5.6M6.4 0.4L0.6 5.6" stroke="#3c3c3c" stroke-width="1.05"/></svg>
<div class="t vd" style="left:22px;top:413px;color:#111"><span class="vdd">09/09/21</span> - qui</div>
<div class="t v" style="left:123px;top:413px;color:#0a0af5">Ferias</div>
<div class="t v" style="left:190px;top:413px;color:#0a0af5">Ferias</div>
<div class="t v" style="left:257px;top:413px;color:#0a0af5">Ferias</div>
<div class="t v" style="left:324px;top:413px;color:#0a0af5">Ferias</div>
<div class="t v" style="left:391px;top:413px;color:#0a0af5">Ferias</div>
<div class="t v" style="left:458px;top:413px;color:#0a0af5">Ferias</div>
<svg class="abs" style="left:545px;top:416px" width="7" height="6"><path d="M0.6 0.4L6.4 5.6M6.4 0.4L0.6 5.6" stroke="#3c3c3c" stroke-width="1.05"/></svg>
<div class="t vd" style="left:22px;top:432px;color:#111"><span class="vdd">10/09/21</span> - sex</div>
<div class="t v" style="left:123px;top:432px;color:#0a0af5">Ferias</div>
<div class="t v" style="left:190px;top:432px;color:#0a0af5">Ferias</div>
<div class="t v" style="left:257px;top:432px;color:#0a0af5">Ferias</div>
<div class="t v" style="left:324px;top:432px;color:#0a0af5">Ferias</div>
<div class="t v" style="left:391px;top:432px;color:#0a0af5">Ferias</div>
<div class="t v" style="left:458px;top:432px;color:#0a0af5">Ferias</div>
<svg class="abs" style="left:545px;top:435px" width="7" height="6"><path d="M0.6 0.4L6.4 5.6M6.4 0.4L0.6 5.6" stroke="#3c3c3c" stroke-width="1.05"/></svg>
<div class="t vd" style="left:22px;top:451px;color:#111"><span class="vdd">11/09/21</span> - sáb</div>
<div class="t v" style="left:123px;top:451px;color:#0a0af5">Ferias</div>
<div class="t v" style="left:190px;top:451px;color:#0a0af5">Ferias</div>
<div class="t v" style="left:257px;top:451px;color:#0a0af5">Ferias</div>
<div class="t v" style="left:324px;top:451px;color:#0a0af5">Ferias</div>
<div class="t v" style="left:391px;top:451px;color:#0a0af5">Ferias</div>
<div class="t v" style="left:458px;top:451px;color:#0a0af5">Ferias</div>
<svg class="abs" style="left:545px;top:454px" width="7" height="6"><path d="M0.6 0.4L6.4 5.6M6.4 0.4L0.6 5.6" stroke="#3c3c3c" stroke-width="1.05"/></svg>
<div class="t vd" style="left:22px;top:470px;color:#f20000"><span class="vdd">12/09/21</span> - dom</div>
<div class="t v" style="left:123px;top:470px;color:#0a0af5">Ferias</div>
<div class="t v" style="left:190px;top:470px;color:#0a0af5">Ferias</div>
<div class="t v" style="left:257px;top:470px;color:#0a0af5">Ferias</div>
<div class="t v" style="left:324px;top:470px;color:#0a0af5">Ferias</div>
<div class="t v" style="left:391px;top:470px;color:#0a0af5">Ferias</div>
<div class="t v" style="left:458px;top:470px;color:#0a0af5">Ferias</div>
<svg class="abs" style="left:545px;top:473px" width="7" height="6"><path d="M0.6 0.4L6.4 5.6M6.4 0.4L0.6 5.6" stroke="#3c3c3c" stroke-width="1.05"/></svg>
<svg class="abs" style="left:704px;top:473px" width="7" height="6"><path d="M0.6 0.4L6.4 5.6M6.4 0.4L0.6 5.6" stroke="#3c3c3c" stroke-width="1.05"/></svg>
<div class="t vd" style="left:22px;top:489px;color:#111"><span class="vdd">13/09/21</span> - seg</div>
<div class="t v" style="left:123px;top:489px;color:#0a0af5">Ferias</div>
<div class="t v" style="left:190px;top:489px;color:#0a0af5">Ferias</div>
<div class="t v" style="left:257px;top:489px;color:#0a0af5">Ferias</div>
<div class="t v" style="left:324px;top:489px;color:#0a0af5">Ferias</div>
<div class="t v" style="left:391px;top:489px;color:#0a0af5">Ferias</div>
<div class="t v" style="left:458px;top:489px;color:#0a0af5">Ferias</div>
<svg class="abs" style="left:545px;top:492px" width="7" height="6"><path d="M0.6 0.4L6.4 5.6M6.4 0.4L0.6 5.6" stroke="#3c3c3c" stroke-width="1.05"/></svg>
<div class="t vd" style="left:22px;top:508px;color:#111"><span class="vdd">14/09/21</span> - ter</div>
<div class="t v" style="left:123px;top:508px;color:#0a0af5">Ferias</div>
<div class="t v" style="left:190px;top:508px;color:#0a0af5">Ferias</div>
<div class="t v" style="left:257px;top:508px;color:#0a0af5">Ferias</div>
<div class="t v" style="left:324px;top:508px;color:#0a0af5">Ferias</div>
<div class="t v" style="left:391px;top:508px;color:#0a0af5">Ferias</div>
<div class="t v" style="left:458px;top:508px;color:#0a0af5">Ferias</div>
<svg class="abs" style="left:545px;top:511px" width="7" height="6"><path d="M0.6 0.4L6.4 5.6M6.4 0.4L0.6 5.6" stroke="#3c3c3c" stroke-width="1.05"/></svg>
<div class="t vd" style="left:22px;top:527px;color:#111"><span class="vdd">15/09/21</span> - qua</div>
<div class="t v" style="left:123px;top:527px;color:#0a0af5">Ferias</div>
<div class="t v" style="left:190px;top:527px;color:#0a0af5">Ferias</div>
<div class="t v" style="left:257px;top:527px;color:#0a0af5">Ferias</div>
<div class="t v" style="left:324px;top:527px;color:#0a0af5">Ferias</div>
<div class="t v" style="left:391px;top:527px;color:#0a0af5">Ferias</div>
<div class="t v" style="left:458px;top:527px;color:#0a0af5">Ferias</div>
<svg class="abs" style="left:545px;top:530px" width="7" height="6"><path d="M0.6 0.4L6.4 5.6M6.4 0.4L0.6 5.6" stroke="#3c3c3c" stroke-width="1.05"/></svg>
<div class="t vd" style="left:22px;top:546px;color:#111"><span class="vdd">16/09/21</span> - qui</div>
<div class="t v" style="left:123px;top:546px;color:#0a0af5">Ferias</div>
<div class="t v" style="left:190px;top:546px;color:#0a0af5">Ferias</div>
<div class="t v" style="left:257px;top:546px;color:#0a0af5">Ferias</div>
<div class="t v" style="left:324px;top:546px;color:#0a0af5">Ferias</div>
<div class="t v" style="left:391px;top:546px;color:#0a0af5">Ferias</div>
<div class="t v" style="left:458px;top:546px;color:#0a0af5">Ferias</div>
<svg class="abs" style="left:545px;top:549px" width="7" height="6"><path d="M0.6 0.4L6.4 5.6M6.4 0.4L0.6 5.6" stroke="#3c3c3c" stroke-width="1.05"/></svg>
<div class="t vd" style="left:22px;top:565px;color:#111"><span class="vdd">17/09/21</span> - sex</div>
<div class="t v" style="left:123px;top:565px;color:#0a0af5">Ferias</div>
<div class="t v" style="left:190px;top:565px;color:#0a0af5">Ferias</div>
<div class="t v" style="left:257px;top:565px;color:#0a0af5">Ferias</div>
<div class="t v" style="left:324px;top:565px;color:#0a0af5">Ferias</div>
<div class="t v" style="left:391px;top:565px;color:#0a0af5">Ferias</div>
<div class="t v" style="left:458px;top:565px;color:#0a0af5">Ferias</div>
<svg class="abs" style="left:545px;top:568px" width="7" height="6"><path d="M0.6 0.4L6.4 5.6M6.4 0.4L0.6 5.6" stroke="#3c3c3c" stroke-width="1.05"/></svg>
<div class="t vd" style="left:22px;top:584px;color:#111"><span class="vdd">18/09/21</span> - sáb</div>
<div class="t v" style="left:123px;top:584px;color:#0a0af5">Ferias</div>
<div class="t v" style="left:190px;top:584px;color:#0a0af5">Ferias</div>
<div class="t v" style="left:257px;top:584px;color:#0a0af5">Ferias</div>
<div class="t v" style="left:324px;top:584px;color:#0a0af5">Ferias</div>
<div class="t v" style="left:391px;top:584px;color:#0a0af5">Ferias</div>
<div class="t v" style="left:458px;top:584px;color:#0a0af5">Ferias</div>
<svg class="abs" style="left:545px;top:587px" width="7" height="6"><path d="M0.6 0.4L6.4 5.6M6.4 0.4L0.6 5.6" stroke="#3c3c3c" stroke-width="1.05"/></svg>
<div class="t vd" style="left:22px;top:603px;color:#f20000"><span class="vdd">19/09/21</span> - dom</div>
<div class="t v" style="left:123px;top:603px;color:#0a0af5">Ferias</div>
<div class="t v" style="left:190px;top:603px;color:#0a0af5">Ferias</div>
<div class="t v" style="left:257px;top:603px;color:#0a0af5">Ferias</div>
<div class="t v" style="left:324px;top:603px;color:#0a0af5">Ferias</div>
<div class="t v" style="left:391px;top:603px;color:#0a0af5">Ferias</div>
<div class="t v" style="left:458px;top:603px;color:#0a0af5">Ferias</div>
<svg class="abs" style="left:545px;top:606px" width="7" height="6"><path d="M0.6 0.4L6.4 5.6M6.4 0.4L0.6 5.6" stroke="#3c3c3c" stroke-width="1.05"/></svg>
<svg class="abs" style="left:704px;top:606px" width="7" height="6"><path d="M0.6 0.4L6.4 5.6M6.4 0.4L0.6 5.6" stroke="#3c3c3c" stroke-width="1.05"/></svg>
<div class="t vd" style="left:22px;top:622px;color:#111"><span class="vdd">20/09/21</span> - seg</div>
<div class="t v" style="left:123px;top:622px;color:#0a0af5">Ferias</div>
<div class="t v" style="left:190px;top:622px;color:#0a0af5">Ferias</div>
<div class="t v" style="left:257px;top:622px;color:#0a0af5">Ferias</div>
<div class="t v" style="left:324px;top:622px;color:#0a0af5">Ferias</div>
<div class="t v" style="left:391px;top:622px;color:#0a0af5">Ferias</div>
<div class="t v" style="left:458px;top:622px;color:#0a0af5">Ferias</div>
<svg class="abs" style="left:545px;top:625px" width="7" height="6"><path d="M0.6 0.4L6.4 5.6M6.4 0.4L0.6 5.6" stroke="#3c3c3c" stroke-width="1.05"/></svg>
<div class="t vd" style="left:22px;top:641px;color:#111"><span class="vdd">21/09/21</span> - ter</div>
<div class="t v" style="left:123px;top:641px;color:#0a0af5">Ferias</div>
<div class="t v" style="left:190px;top:641px;color:#0a0af5">Ferias</div>
<div class="t v" style="left:257px;top:641px;color:#0a0af5">Ferias</div>
<div class="t v" style="left:324px;top:641px;color:#0a0af5">Ferias</div>
<div class="t v" style="left:391px;top:641px;color:#0a0af5">Ferias</div>
<div class="t v" style="left:458px;top:641px;color:#0a0af5">Ferias</div>
<svg class="abs" style="left:545px;top:644px" width="7" height="6"><path d="M0.6 0.4L6.4 5.6M6.4 0.4L0.6 5.6" stroke="#3c3c3c" stroke-width="1.05"/></svg>
<div class="t vd" style="left:22px;top:660px;color:#111"><span class="vdd">22/09/21</span> - qua</div>
<div class="t v" style="left:123px;top:660px;color:#0a0af5">Ferias</div>
<div class="t v" style="left:190px;top:660px;color:#0a0af5">Ferias</div>
<div class="t v" style="left:257px;top:660px;color:#0a0af5">Ferias</div>
<div class="t v" style="left:324px;top:660px;color:#0a0af5">Ferias</div>
<div class="t v" style="left:391px;top:660px;color:#0a0af5">Ferias</div>
<div class="t v" style="left:458px;top:660px;color:#0a0af5">Ferias</div>
<svg class="abs" style="left:545px;top:663px" width="7" height="6"><path d="M0.6 0.4L6.4 5.6M6.4 0.4L0.6 5.6" stroke="#3c3c3c" stroke-width="1.05"/></svg>
<div class="t vd" style="left:22px;top:679px;color:#111"><span class="vdd">23/09/21</span> - qui</div>
<div class="t v" style="left:123px;top:679px;color:#0a0af5">Ferias</div>
<div class="t v" style="left:190px;top:679px;color:#0a0af5">Ferias</div>
<div class="t v" style="left:257px;top:679px;color:#0a0af5">Ferias</div>
<div class="t v" style="left:324px;top:679px;color:#0a0af5">Ferias</div>
<div class="t v" style="left:391px;top:679px;color:#0a0af5">Ferias</div>
<div class="t v" style="left:458px;top:679px;color:#0a0af5">Ferias</div>
<svg class="abs" style="left:545px;top:682px" width="7" height="6"><path d="M0.6 0.4L6.4 5.6M6.4 0.4L0.6 5.6" stroke="#3c3c3c" stroke-width="1.05"/></svg>
<div class="t vd" style="left:22px;top:698px;color:#111"><span class="vdd">24/09/21</span> - sex</div>
<div class="t v" style="left:123px;top:698px;color:#0a0af5">Ferias</div>
<div class="t v" style="left:190px;top:698px;color:#0a0af5">Ferias</div>
<div class="t v" style="left:257px;top:698px;color:#0a0af5">Ferias</div>
<div class="t v" style="left:324px;top:698px;color:#0a0af5">Ferias</div>
<div class="t v" style="left:391px;top:698px;color:#0a0af5">Ferias</div>
<div class="t v" style="left:458px;top:698px;color:#0a0af5">Ferias</div>
<svg class="abs" style="left:545px;top:701px" width="7" height="6"><path d="M0.6 0.4L6.4 5.6M6.4 0.4L0.6 5.6" stroke="#3c3c3c" stroke-width="1.05"/></svg>
<div class="t vd" style="left:22px;top:717px;color:#111"><span class="vdd">25/09/21</span> - sáb</div>
<div class="t v" style="left:123px;top:717px;color:#0a0af5">Ferias</div>
<div class="t v" style="left:190px;top:717px;color:#0a0af5">Ferias</div>
<div class="t v" style="left:257px;top:717px;color:#0a0af5">Ferias</div>
<div class="t v" style="left:324px;top:717px;color:#0a0af5">Ferias</div>
<div class="t v" style="left:391px;top:717px;color:#0a0af5">Ferias</div>
<div class="t v" style="left:458px;top:717px;color:#0a0af5">Ferias</div>
<svg class="abs" style="left:545px;top:720px" width="7" height="6"><path d="M0.6 0.4L6.4 5.6M6.4 0.4L0.6 5.6" stroke="#3c3c3c" stroke-width="1.05"/></svg>
<div class="t vd" style="left:22px;top:736px;color:#f20000"><span class="vdd">26/09/21</span> - dom</div>
<div class="t v" style="left:123px;top:736px;color:#0a0af5">Ferias</div>
<div class="t v" style="left:190px;top:736px;color:#0a0af5">Ferias</div>
<div class="t v" style="left:257px;top:736px;color:#0a0af5">Ferias</div>
<div class="t v" style="left:324px;top:736px;color:#0a0af5">Ferias</div>
<div class="t v" style="left:391px;top:736px;color:#0a0af5">Ferias</div>
<div class="t v" style="left:458px;top:736px;color:#0a0af5">Ferias</div>
<svg class="abs" style="left:545px;top:739px" width="7" height="6"><path d="M0.6 0.4L6.4 5.6M6.4 0.4L0.6 5.6" stroke="#3c3c3c" stroke-width="1.05"/></svg>
<svg class="abs" style="left:704px;top:739px" width="7" height="6"><path d="M0.6 0.4L6.4 5.6M6.4 0.4L0.6 5.6" stroke="#3c3c3c" stroke-width="1.05"/></svg>
<div class="t vd" style="left:22px;top:755px;color:#111"><span class="vdd">27/09/21</span> - seg</div>
<div class="t v" style="left:123px;top:755px;color:#0a0af5">Ferias</div>
<div class="t v" style="left:190px;top:755px;color:#0a0af5">Ferias</div>
<div class="t v" style="left:257px;top:755px;color:#0a0af5">Ferias</div>
<div class="t v" style="left:324px;top:755px;color:#0a0af5">Ferias</div>
<div class="t v" style="left:391px;top:755px;color:#0a0af5">Ferias</div>
<div class="t v" style="left:458px;top:755px;color:#0a0af5">Ferias</div>
<svg class="abs" style="left:545px;top:758px" width="7" height="6"><path d="M0.6 0.4L6.4 5.6M6.4 0.4L0.6 5.6" stroke="#3c3c3c" stroke-width="1.05"/></svg>
<div class="t vd" style="left:22px;top:774px;color:#111"><span class="vdd">28/09/21</span> - ter</div>
<div class="t v" style="left:123px;top:774px;color:#0a0af5">Ferias</div>
<div class="t v" style="left:190px;top:774px;color:#0a0af5">Ferias</div>
<div class="t v" style="left:257px;top:774px;color:#0a0af5">Ferias</div>
<div class="t v" style="left:324px;top:774px;color:#0a0af5">Ferias</div>
<div class="t v" style="left:391px;top:774px;color:#0a0af5">Ferias</div>
<div class="t v" style="left:458px;top:774px;color:#0a0af5">Ferias</div>
<svg class="abs" style="left:545px;top:777px" width="7" height="6"><path d="M0.6 0.4L6.4 5.6M6.4 0.4L0.6 5.6" stroke="#3c3c3c" stroke-width="1.05"/></svg>
<div class="t vd" style="left:22px;top:793px;color:#111"><span class="vdd">29/09/21</span> - qua</div>
<div class="t v" style="left:123px;top:793px;color:#0a0af5">Ferias</div>
<div class="t v" style="left:190px;top:793px;color:#0a0af5">Ferias</div>
<div class="t v" style="left:257px;top:793px;color:#0a0af5">Ferias</div>
<div class="t v" style="left:324px;top:793px;color:#0a0af5">Ferias</div>
<div class="t v" style="left:391px;top:793px;color:#0a0af5">Ferias</div>
<div class="t v" style="left:458px;top:793px;color:#0a0af5">Ferias</div>
<svg class="abs" style="left:545px;top:796px" width="7" height="6"><path d="M0.6 0.4L6.4 5.6M6.4 0.4L0.6 5.6" stroke="#3c3c3c" stroke-width="1.05"/></svg>
<div class="t vd" style="left:22px;top:812px;color:#111"><span class="vdd">30/09/21</span> - qui</div>
<div class="t v" style="left:123px;top:812px;color:#0a0af5">Ferias</div>
<div class="t v" style="left:190px;top:812px;color:#0a0af5">Ferias</div>
<div class="t v" style="left:257px;top:812px;color:#0a0af5">Ferias</div>
<div class="t v" style="left:324px;top:812px;color:#0a0af5">Ferias</div>
<div class="t v" style="left:391px;top:812px;color:#0a0af5">Ferias</div>
<div class="t v" style="left:458px;top:812px;color:#0a0af5">Ferias</div>
<svg class="abs" style="left:545px;top:815px" width="7" height="6"><path d="M0.6 0.4L6.4 5.6M6.4 0.4L0.6 5.6" stroke="#3c3c3c" stroke-width="1.05"/></svg>
<div class="abs" style="left:80px;top:246px;width:616px;height:409px;background:#d6e3f0;border:1px solid #3a3a3a;border-radius:5px 5px 0 0"></div>
<div class="abs" style="left:81px;top:247px;width:614px;height:30px;border-radius:4px 4px 0 0;background:linear-gradient(#bccbdb,#d3dfec)"></div>
<div class="t" style="left:110px;top:260px;font-size:12px;letter-spacing:-0.25px;color:#8a8a9c">Alterações em massa</div>
<div class="abs" style="left:586px;top:256px;width:32px;height:18px;border:1px solid #6e7fa0;border-radius:2px;background:linear-gradient(#c3d0e0,#d3dfec)"></div>
<div class="abs" style="left:596px;top:264px;width:11px;height:5px;border:1px solid #3a3a4c;border-radius:2px;background:#e4e4e4"></div>
<div class="abs" style="left:620px;top:256px;width:32px;height:18px;border:1px solid #9ba8b8;border-radius:2px;background:linear-gradient(#c3d0e0,#d3dfec)"></div>
<div class="abs" style="left:630px;top:260px;width:11px;height:9px;border:1.5px solid #3a3a4c;border-radius:2px;background:#e4e4e4"></div>
<div class="abs" style="left:633px;top:263px;width:5px;height:3px;border:1px solid #3a3a4c;background:#c8d8ea"></div>
<div class="abs" style="left:654px;top:256px;width:32px;height:18px;border:1px solid #6e7fa0;border-radius:2px;background:linear-gradient(#c3d0e0,#d3dfec)"></div>
<svg class="abs" style="left:663px;top:259px" width="13" height="11" viewBox="0 0 13 11"><path d="M1.2 1.2H4.6L6.5 3.2L8.4 1.2H11.8L8.2 5.5L11.8 9.8H8.4L6.5 7.8L4.6 9.8H1.2L4.8 5.5Z" fill="#ececec" stroke="#3a3a4c" stroke-width="1.1" stroke-linejoin="round"/></svg>
<div class="abs" style="left:88px;top:277px;width:600px;height:369px;background:#e9eef6"></div>
<svg class="abs" style="left:0;top:0;overflow:visible" width="1589" height="855"><g transform="translate(88.5,255.5) scale(0.52)">
<defs><linearGradient id="gdb2" x1="0" x2="1"><stop offset="0" stop-color="#8c8c8c"/><stop offset="0.5" stop-color="#e4e4e4"/><stop offset="1" stop-color="#9a9a9a"/></linearGradient>
<linearGradient id="ggr" x1="0" y1="0" x2="0" y2="1"><stop offset="0" stop-color="#c4f2b0"/><stop offset="1" stop-color="#86dc74"/></linearGradient></defs>
<path d="M8.2 6.5V26A11.35 3.6 0 0 0 30.9 26V6.5Z" fill="url(#gdb2)"/>
<ellipse cx="19.55" cy="6.6" rx="11.35" ry="3.9" fill="#e9e9e9" stroke="#c4c4c4" stroke-width="0.6"/>
<path d="M8.2 12.5A11.35 3.6 0 0 0 30.9 12.5M8.2 19.5A11.35 3.6 0 0 0 30.9 19.5" stroke="#5e5e5e" stroke-width="1.3" fill="none"/>
<path d="M8.2 13.7A11.35 3.6 0 0 0 30.9 13.7M8.2 20.7A11.35 3.6 0 0 0 30.9 20.7" stroke="#f0f0f0" stroke-width="0.8" fill="none"/>
<path d="M8.8 15.1H13.9V20.9H20.1V26H13.9V31.7H8.8V26H3.1V20.9H8.8Z" fill="url(#ggr)" stroke="#1e9a2e" stroke-width="1.1"/>
</g><g transform="translate(95,283) scale(1.0)">
<defs><linearGradient id="gdb2" x1="0" x2="1"><stop offset="0" stop-color="#8c8c8c"/><stop offset="0.5" stop-color="#e4e4e4"/><stop offset="1" stop-color="#9a9a9a"/></linearGradient>
<linearGradient id="ggr" x1="0" y1="0" x2="0" y2="1"><stop offset="0" stop-color="#c4f2b0"/><stop offset="1" stop-color="#86dc74"/></linearGradient></defs>
<path d="M8.2 6.5V26A11.35 3.6 0 0 0 30.9 26V6.5Z" fill="url(#gdb2)"/>
<ellipse cx="19.55" cy="6.6" rx="11.35" ry="3.9" fill="#e9e9e9" stroke="#c4c4c4" stroke-width="0.6"/>
<path d="M8.2 12.5A11.35 3.6 0 0 0 30.9 12.5M8.2 19.5A11.35 3.6 0 0 0 30.9 19.5" stroke="#5e5e5e" stroke-width="1.3" fill="none"/>
<path d="M8.2 13.7A11.35 3.6 0 0 0 30.9 13.7M8.2 20.7A11.35 3.6 0 0 0 30.9 20.7" stroke="#f0f0f0" stroke-width="0.8" fill="none"/>
<path d="M8.8 15.1H13.9V20.9H20.1V26H13.9V31.7H8.8V26H3.1V20.9H8.8Z" fill="url(#ggr)" stroke="#1e9a2e" stroke-width="1.1"/>
</g></svg>
<div class="t" style="left:136px;top:296px;font-size:16px;font-weight:bold;letter-spacing:0.65px;color:#3b3b5b">Alterações em massa</div>
<div class="abs" style="left:100px;top:321px;width:581px;height:299px;background:#fff;border:1px solid #8aa4c4"></div>
<div class="t" style="left:116px;top:334px;font-size:12px;font-weight:bold;letter-spacing:0.85px;color:#3b3b55">Finalizar</div>
<div class="t v" style="left:116px;top:358px;color:#3a3a50;letter-spacing:0.86px">Revise os dados abaixo e clique no botão abaixo...</div>
<div class="abs" style="left:116px;top:381px;width:545px;height:189px;background:#fff;border:1px solid #7f9dc0"></div>
<div class="t v10" style="left:119px;top:399px">Opção selecionada: APAGAR AFASTAMENTOS</div>
<div class="t v10" style="left:119px;top:425px;letter-spacing:1.05px">Filtros selecionados:</div>
<div class="t v10" style="left:139px;top:438px">Funcionário: TESTE SCPONTO</div>
<div class="t v10" style="left:119px;top:477px;letter-spacing:1.15px">Data: 01/09/2021 até 30/09/2021 - TESTE SCPONTO</div>
<div class="btn" style="left:576px;top:577px;width:85px;height:20px"><span style="top:4px">Iniciar</span></div>
<div class="abs" style="left:560px;top:563px;width:112px;height:43px;border:3px solid #ff0000;border-radius:2px"></div>
<div class="btn" style="left:400px;top:625px;width:85px;height:20px"><span style="top:4px">Cancelar</span></div>
<div class="btn" style="left:504px;top:625px;width:85px;height:20px"><span style="top:4px">Anterior</span></div>
<div class="btn" style="left:592px;top:625px;width:85px;height:20px;box-shadow:inset 0 0 0 1px #1a3ff0,inset 0 0 0 2px #f4f8fc"><span style="top:4px">Próximo</span></div>
</body></html>
